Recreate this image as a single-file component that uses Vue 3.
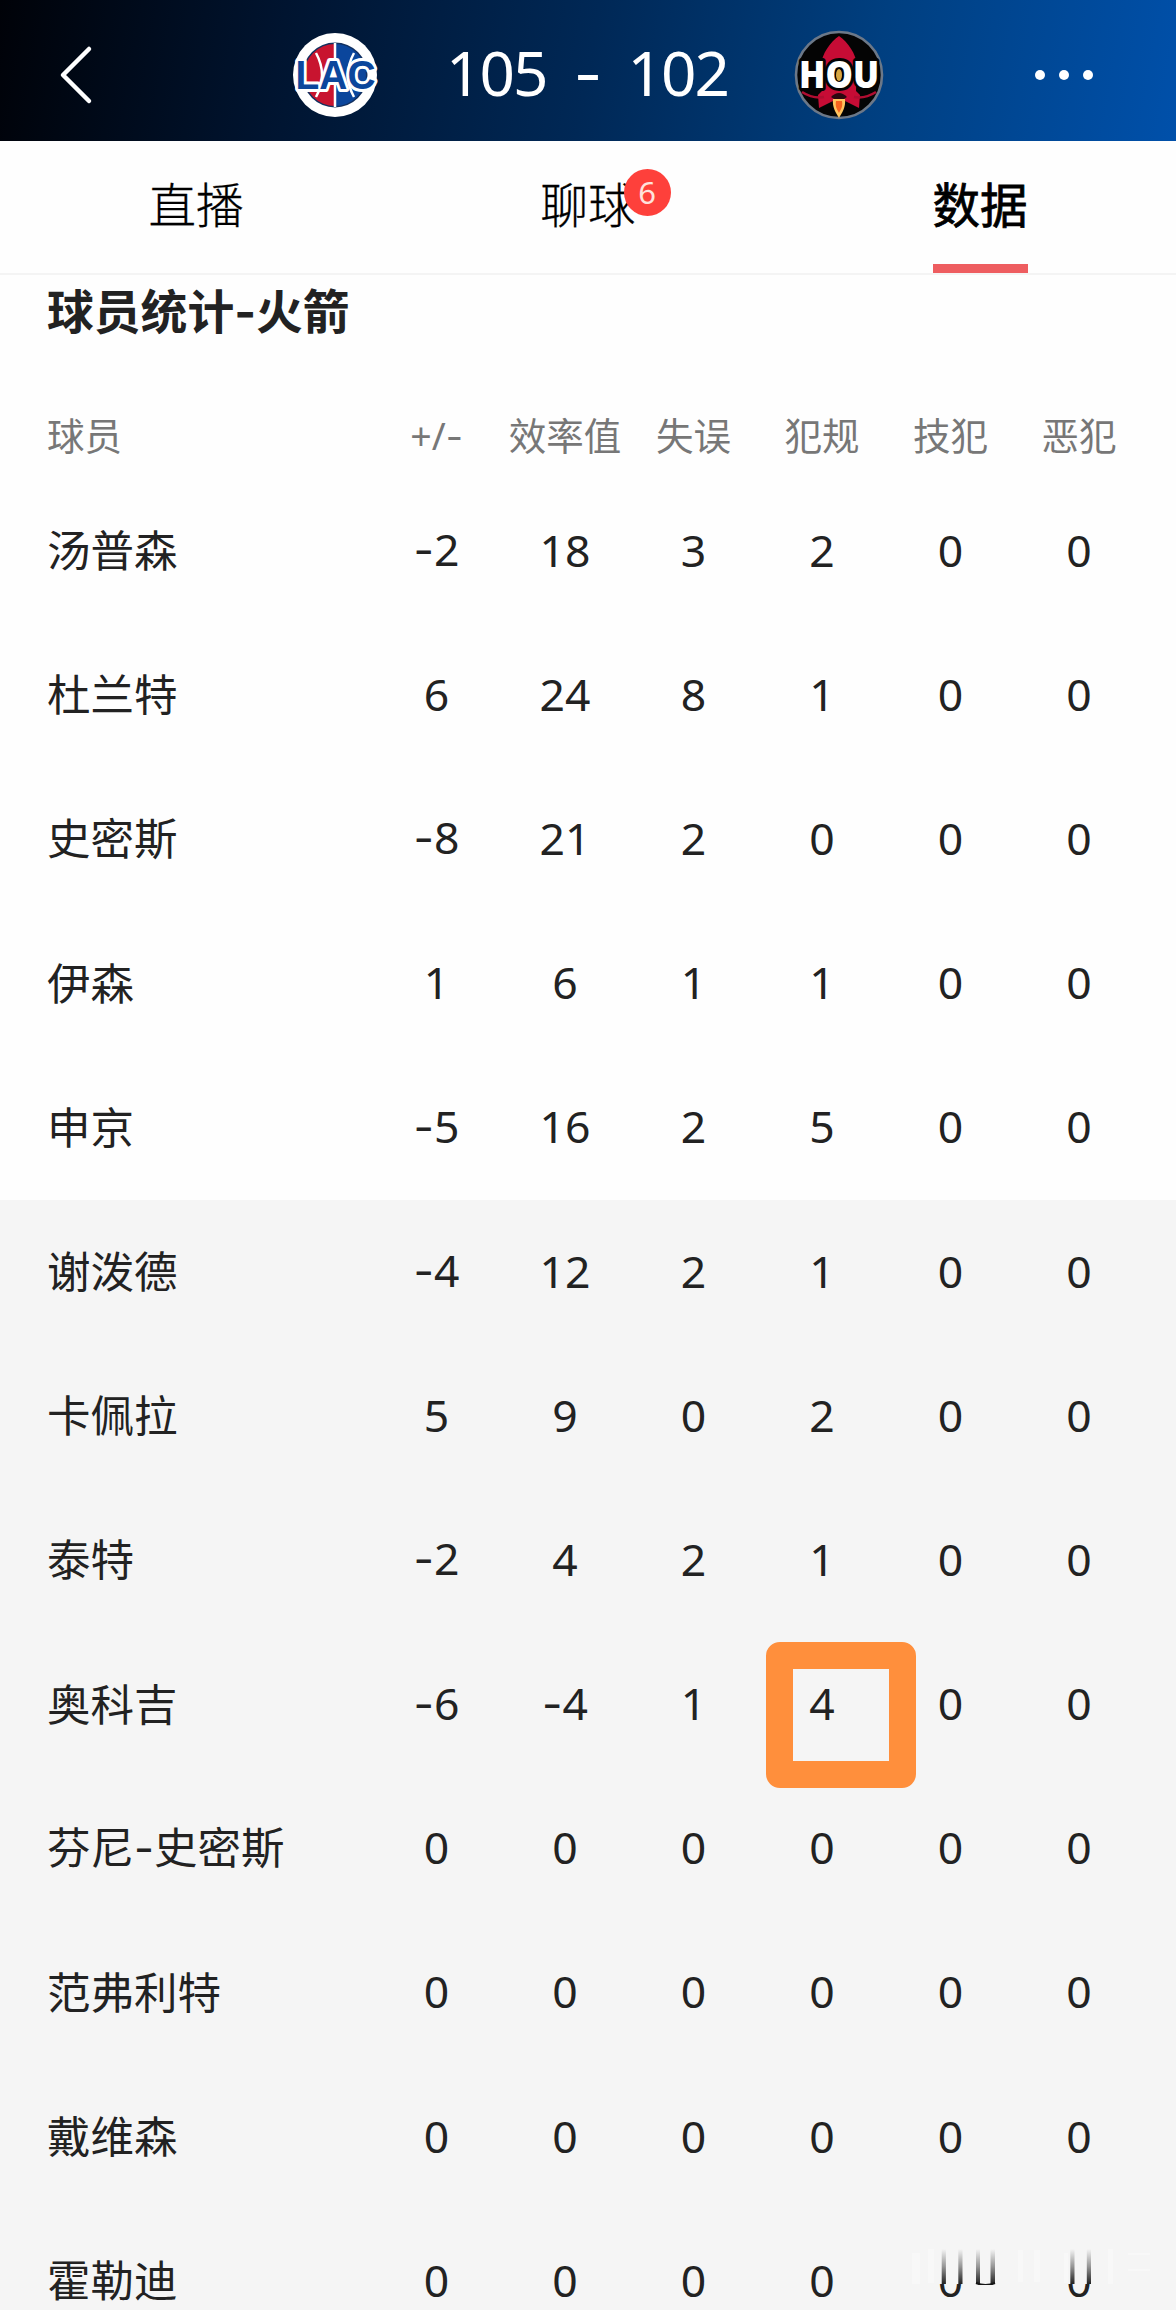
<script setup>
import { ref } from 'vue'

const tabs = [
  { key: 'live', label: '直播' },
  { key: 'chat', label: '聊球', badge: 6 },
  { key: 'data', label: '数据' }
]
const currentTab = ref('data')

const columns = ['+/-', '效率值', '失误', '犯规', '技犯', '恶犯']

// First five players are the starters
const players = [
  { name: '汤普森', stats: [-2, 18, 3, 2, 0, 0] },
  { name: '杜兰特', stats: [6, 24, 8, 1, 0, 0] },
  { name: '史密斯', stats: [-8, 21, 2, 0, 0, 0] },
  { name: '伊森', stats: [1, 6, 1, 1, 0, 0] },
  { name: '申京', stats: [-5, 16, 2, 5, 0, 0] },
  { name: '谢泼德', stats: [-4, 12, 2, 1, 0, 0] },
  { name: '卡佩拉', stats: [5, 9, 0, 2, 0, 0] },
  { name: '泰特', stats: [-2, 4, 2, 1, 0, 0] },
  { name: '奥科吉', stats: [-6, -4, 1, 4, 0, 0], marked: 3 },
  { name: '芬尼-史密斯', stats: [0, 0, 0, 0, 0, 0] },
  { name: '范弗利特', stats: [0, 0, 0, 0, 0, 0] },
  { name: '戴维森', stats: [0, 0, 0, 0, 0, 0] },
  { name: '霍勒迪', stats: [0, 0, 0, 0, 0, 0] }
]

// Split on the dash so it can use a wider glyph
const parts = (value) => String(value).split(/(-)/).filter(p => p !== '')
</script>

<template>
  <div class="page">
    <header class="topbar">
      <svg class="back" viewBox="0 0 40 64">
        <path d="M32 6 L6 32 L32 58" />
      </svg>

      <div class="match">
        <svg class="logo" viewBox="0 0 92 92">
          <circle cx="46" cy="46" r="42" fill="#fff" />
          <circle cx="46" cy="46" r="32.5" fill="#12305f" />
          <path d="M46 15 A31 31 0 0 0 46 77 Z" fill="#c8142f" />
          <path d="M46 15 A31 31 0 0 1 46 77 Z" fill="#0b469c" />
          <path d="M46 14 V78 M27 24 Q39 46 27 68 M65 24 Q53 46 65 68" stroke="#fff" stroke-width="2.5" fill="none" />
          <text class="lac" x="46.5" y="60" textLength="80" lengthAdjust="spacingAndGlyphs">LAC</text>
        </svg>
        <div class="score">
          <span>105</span>
          <span class="colon">-</span>
          <span>102</span>
        </div>
        <svg class="logo" viewBox="0 0 92 92">
          <circle cx="46" cy="46" r="43" fill="#040404" stroke="#6c7888" stroke-width="2.6" />
          <path d="M46 7 C37 13 29 25 28 36 L29 62 L25 66 L26 79 L38 73 L46 69 L54 73 L66 79 L67 66 L63 62 L64 36 C63 25 55 13 46 7 Z" fill="#c60c35" />
          <path d="M9 63 Q20 70 31 68 M83 63 Q72 70 61 68" stroke="#b00d31" stroke-width="2.5" fill="none" />
          <path d="M38 68 Q46 60 54 68 L51 70 H41 Z" fill="#2b0810" />
          <path d="M40 70 H52 C53 78 49 84 46 89 C43 84 39 78 40 70 Z" fill="#ffc45e" />
          <path d="M43 72 H49 C50 78 48 80 46 84 C44 80 42 78 43 72 Z" fill="#f5641e" />
          <text class="hou" x="46" y="59" textLength="80" lengthAdjust="spacingAndGlyphs">HOU</text>
          <ellipse cx="46" cy="46" rx="3" ry="6" fill="#d8a741" />
        </svg>
      </div>

      <div class="more"><i></i><i></i><i></i></div>
    </header>

    <nav class="tabs">
      <div
        v-for="tab in tabs"
        :key="tab.key"
        class="tab"
        :class="{ active: currentTab === tab.key }"
        @click="currentTab = tab.key"
      >
        <span class="tab-label">
          {{ tab.label }}
          <b v-if="tab.badge" class="badge">{{ tab.badge }}</b>
        </span>
      </div>
    </nav>

    <h2 class="title">球员统计<span class="dash">-</span>火箭</h2>

    <div class="row head">
      <div class="name">球员</div>
      <div v-for="col in columns" :key="col" class="cell">
        <span v-for="(p, k) in parts(col)" :key="k" :class="{ dash: p === '-' }">{{ p }}</span>
      </div>
    </div>

    <div
      v-for="(player, i) in players"
      :key="i"
      class="row"
      :class="{ bench: i > 4 }"
    >
      <div class="name">
        <span v-for="(p, k) in parts(player.name)" :key="k" :class="{ dash: p === '-' }">{{ p }}</span>
      </div>
      <div v-for="(stat, j) in player.stats" :key="j" class="cell">
        <span v-for="(p, k) in parts(stat)" :key="k" :class="{ dash: p === '-' }">{{ p }}</span>
        <div v-if="player.marked === j" class="marker"></div>
      </div>
    </div>

    <!-- faded strip over the bottom right corner -->
    <svg class="smear" viewBox="0 0 260 44">
      <defs>
        <linearGradient id="fade" x1="0" y1="0" x2="0" y2="1">
          <stop offset="0" stop-color="#222" stop-opacity="0" />
          <stop offset="0.5" stop-color="#222" stop-opacity="0.45" />
          <stop offset="1" stop-color="#222" />
        </linearGradient>
      </defs>
      <rect width="260" height="43" fill="#f5f5f5" />
      <g fill="#f8f8f8">
        <rect x="12" y="12" width="8" height="31" />
        <rect x="28" y="8" width="6" height="34" />
        <rect x="118" y="9" width="5" height="32" />
        <rect x="134" y="9" width="6" height="32" />
        <rect x="164" y="12" width="4" height="30" />
        <rect x="208" y="8" width="5" height="35" />
        <rect x="228" y="12" width="22" height="2" />
        <rect x="228" y="28" width="22" height="2" />
      </g>
      <g fill="url(#fade)">
        <rect x="41.7" y="8" width="4.2" height="35" />
        <rect x="58.3" y="8" width="4.2" height="35" />
        <rect x="76" y="8" width="4" height="35" />
        <rect x="90.5" y="8" width="4.5" height="35" />
        <rect x="170.3" y="8" width="4.2" height="35" />
        <rect x="186.8" y="8" width="4.2" height="35" />
      </g>
      <path d="M76 42 Q85.500 46 95 42" stroke="#161616" stroke-width="2" fill="none" />
    </svg>
  </div>
</template>

<style>
body {
  margin: 0;
  background: #fff;
}
</style>

<style scoped>
.page {
  position: relative;
  width: 1176px;
  height: 2310px;
  overflow: hidden;
  background: #fefefe;
  color: #222;
  font-family: "Noto Sans", "Noto Sans CJK SC", sans-serif;
}

.topbar {
  display: flex;
  align-items: center;
  justify-content: space-between;
  box-sizing: border-box;
  height: 141px;
  padding: 8px 83px 0 57px;
  background: linear-gradient(100deg, #000208 0%, #001430 24%, #002856 50%, #003f80 74%, #0050aa 100%);
}

.back {
  width: 40px;
  height: 64px;
}

.back path {
  fill: none;
  stroke: #fff;
  stroke-width: 4.5;
  stroke-linecap: round;
  stroke-linejoin: round;
}

.match {
  display: flex;
  align-items: center;
  justify-content: space-between;
  width: 596px;
  margin-left: 42px;
}

.logo {
  overflow: visible;
  width: 92px;
  height: 92px;
}

.lac,
.hou {
  font-family: "Liberation Sans", sans-serif;
  font-weight: bold;
  text-anchor: middle;
  paint-order: stroke;
  stroke-linejoin: round;
}

.lac {
  font-size: 40px;
  fill: #0b469c;
  stroke: #fff;
  stroke-width: 6px;
}

.hou {
  font-family: "Open Sans", sans-serif;
  font-weight: 800;
  font-size: 37px;
  fill: #fff;
  stroke: #040404;
  stroke-width: 6px;
}

.score {
  display: flex;
  align-items: center;
  justify-content: space-between;
  width: 282px;
  margin-bottom: 6px;
  color: #fff;
  font-size: 62px;
  letter-spacing: -2px;
  line-height: 80px;
}

.colon {
  padding-top: 6px;
  font-family: Inter, sans-serif;
}

.more {
  display: flex;
  gap: 14px;
}

.more i {
  width: 10px;
  height: 10px;
  border-radius: 50%;
  background: #fff;
}

.tabs {
  display: flex;
  height: 132px;
  border-bottom: 2px solid #f4f4f4;
}

.tab {
  display: flex;
  flex: 1;
  justify-content: center;
  color: #000;
  font-family: "Noto Sans CJK SC", sans-serif;
  font-size: 47.5px;
  font-weight: 300;
  -webkit-text-stroke: 0.3px #000;
}

.tab-label {
  position: relative;
  box-sizing: border-box;
  height: 132px;
  line-height: 123px;
}

.tab.active .tab-label {
  border-bottom: 9px solid #ee5d60;
  font-weight: 400;
  -webkit-text-stroke: 0.8px #000;
}

.badge {
  position: absolute;
  top: 28px;
  left: 83px;
  width: 47px;
  height: 47px;
  border-radius: 50%;
  background: #fe403b;
  color: #ffe2dc;
  font-family: "Noto Sans", sans-serif;
  font-size: 31px;
  font-weight: 400;
  line-height: 47px;
  text-align: center;
  -webkit-text-stroke: 0;
}

.title {
  height: 118px;
  margin: 0;
  padding-left: 47px;
  font-family: "Noto Sans CJK SC", sans-serif;
  font-size: 46.8px;
  font-weight: 700;
  line-height: 67px;
}

.dash {
  font-family: Inter, sans-serif;
}

.row {
  display: grid;
  grid-template-columns: 325.300px repeat(6, 128.500px);
  align-items: center;
  height: 144.200px;
  padding-left: 47px;
}

.row.head {
  height: 86px;
  color: #777;
  font-size: 37.500px;
}

.bench {
  background: #f5f5f5;
}

.name {
  padding-bottom: 4px;
  font-family: "Noto Sans CJK SC", sans-serif;
  font-size: 43.500px;
  line-height: 60px;
  white-space: nowrap;
}

.cell {
  position: relative;
  padding-bottom: 3px;
  font-size: 44.500px;
  line-height: 60px;
  text-align: center;
  white-space: nowrap;
}

.head .name,
.head .cell {
  font-size: 37.500px;
}

.head .cell {
  padding-bottom: 0;
}

/* hand-drawn highlight around one value */
.marker {
  position: absolute;
  top: -31px;
  left: 8px;
  box-sizing: border-box;
  width: 150px;
  height: 146px;
  border: 27px solid #ff8f3c;
  border-radius: 14px;
}

.smear {
  position: absolute;
  top: 2241px;
  left: 900px;
  width: 260px;
  height: 44px;
}
</style>
